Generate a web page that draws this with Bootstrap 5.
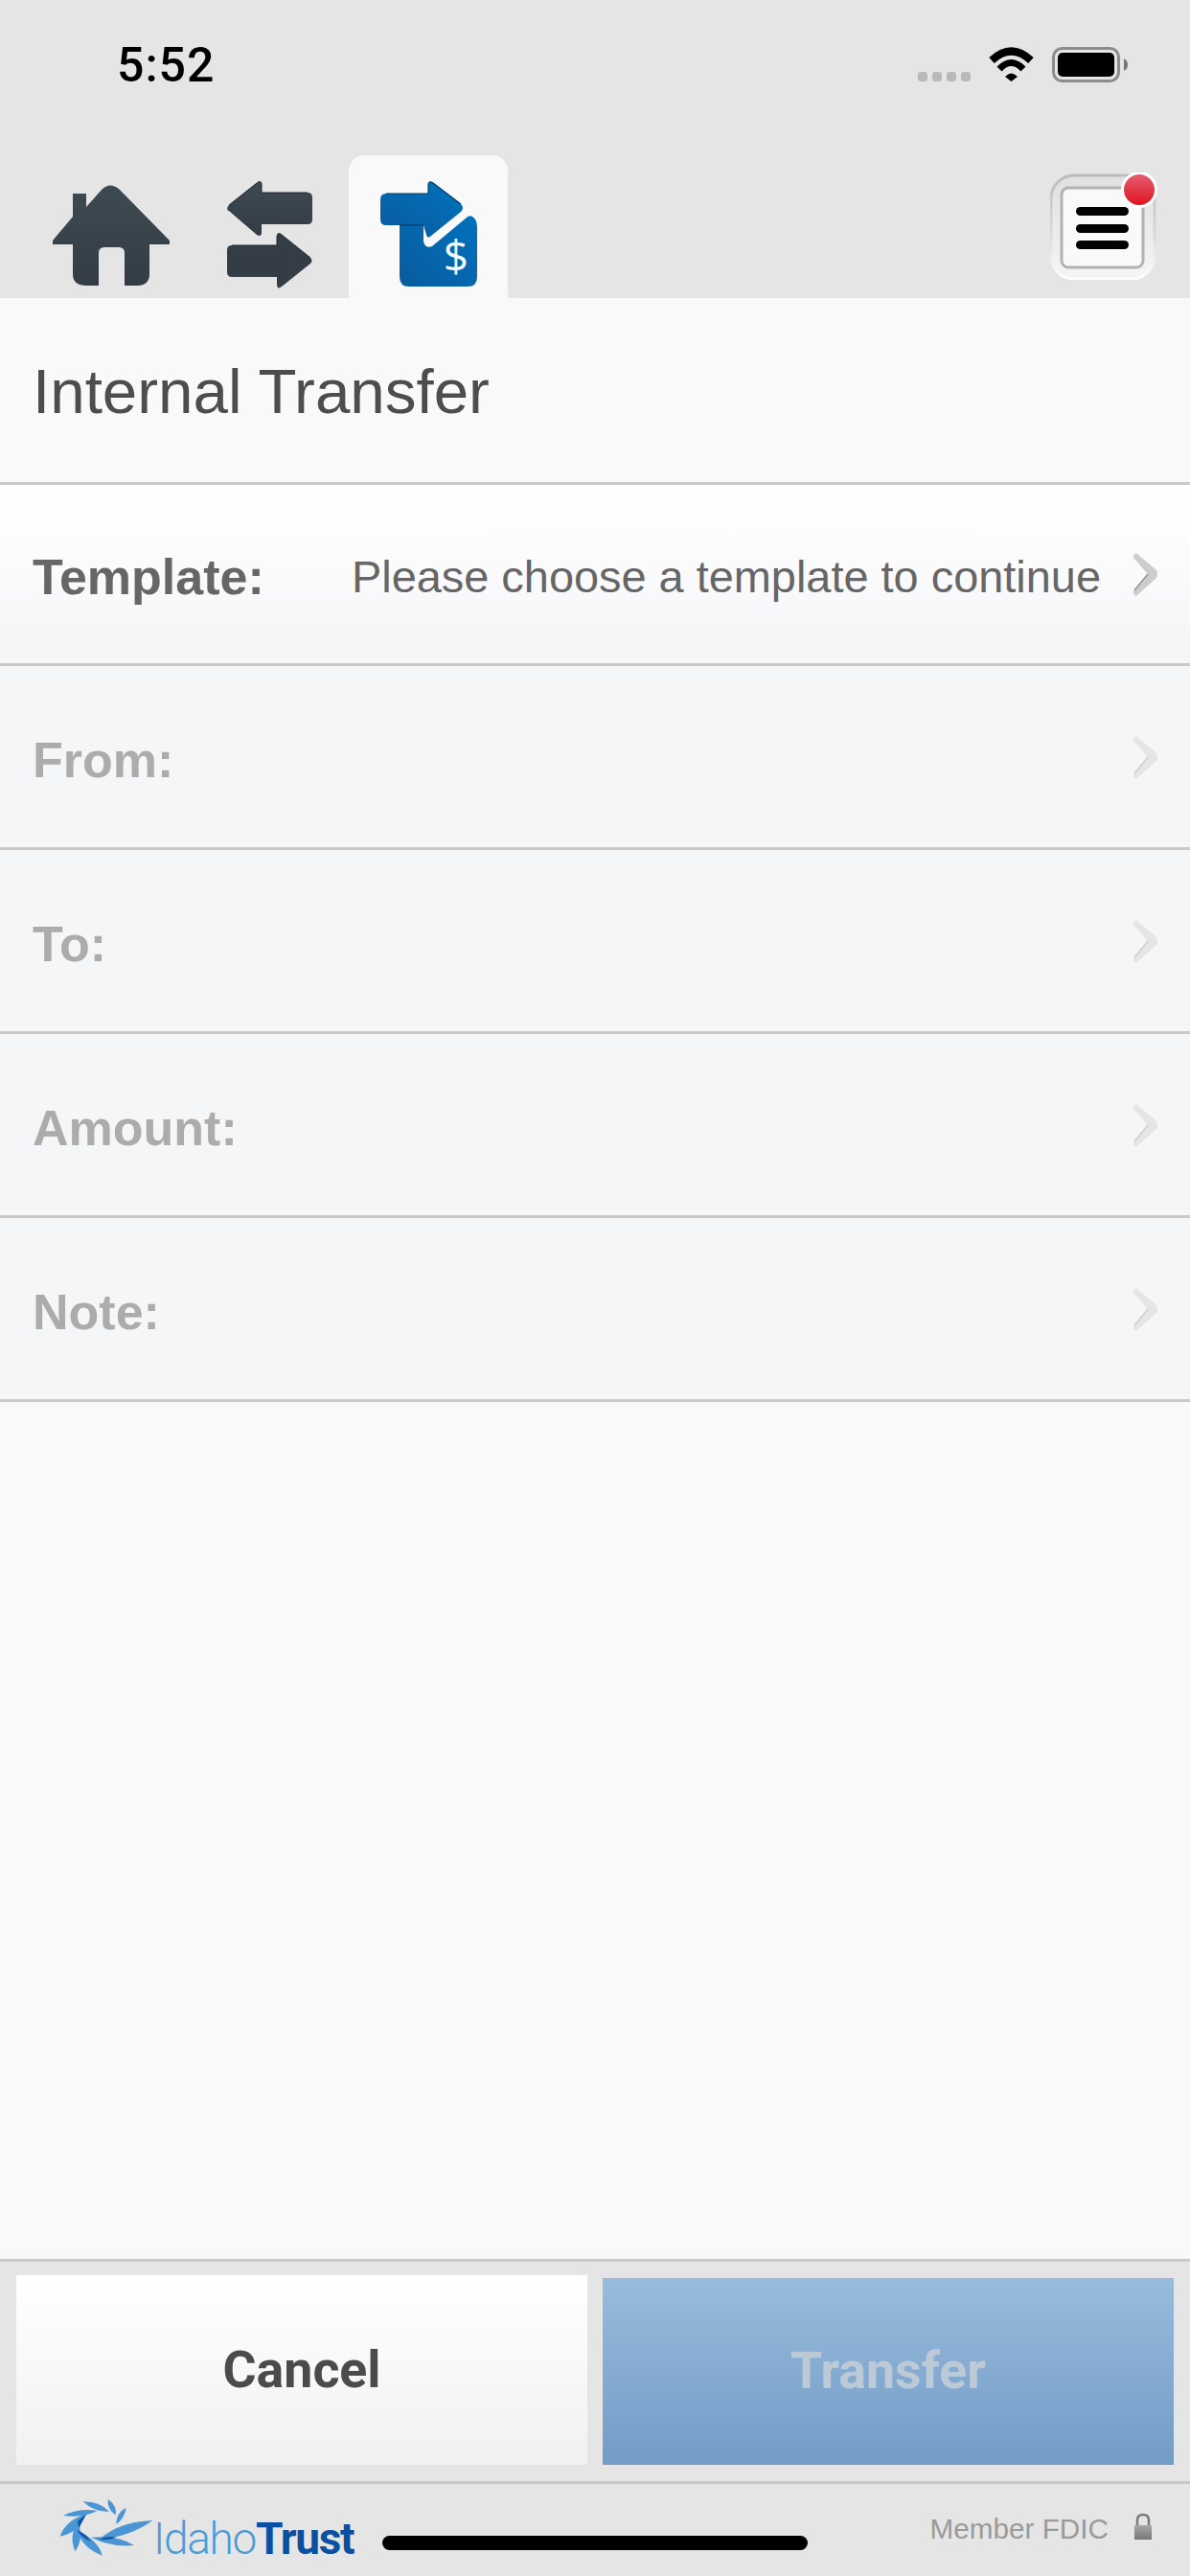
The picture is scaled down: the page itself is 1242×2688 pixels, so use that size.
<!DOCTYPE html>
<html>
<head>
    <title>Internal Transfer</title>
    <link href="https://cdn.jsdelivr.net/npm/bootstrap@5.3.0/dist/css/bootstrap.min.css" rel="stylesheet">
    <style>
        body { font-family: "Liberation Sans", Arial, sans-serif; background-color: #e5e5e5; }
        .screen { height: 2688px; overflow: hidden; }
        .status-row { height: 162px; padding: 40px 62px 0 122px; }
        .clock { font-family: Roboto, sans-serif; font-weight: 500; font-size: 50px; line-height: 50px; color: #000; letter-spacing: 1px; margin-top: 3px; }
        .tab-row { height: 149px; }
        .tab-slot { display: block; width: 182px; height: 149px; }
        .tab-current { display: block; width: 166px; height: 149px; background-color: #f9f9f9; border-radius: 16px 16px 0 0; }
        .menu-btn { display: block; width: 112px; height: 112px; margin: 18px 34px 0 0; }
        .main-pane { background-color: #f9f9f9; }
        .title-row { height: 195px; padding: 5px 0 0 34px; border-bottom: 3px solid #c9c9c9; }
        .title-row h1 { font-size: 65.500px; font-weight: 400; color: #4d4d4d; margin: 0; }
        .pick-list { border-radius: 0; }
        .pick-row { height: 192px; padding: 0 30px 0 34px; background-color: #f5f6f8; border: 0; border-bottom: 3px solid #c9c9c9; color: #acacac; font-size: 52px; }
        .pick-row.is-open { height: 189px; background-color: transparent; background-image: linear-gradient(#fff, #fbfbfc 45%, #f5f6f8 85%); color: #666; }
        .pick-label { font-weight: 700; padding-top: 7px; }
        .is-open .pick-label { padding-top: 6px; }
        .pick-value { font-size: 46.900px; padding-top: 6px; margin-left: auto; margin-right: 31px; }
        .pick-arrow { flex-shrink: 0; }
        .pick-label + .pick-arrow { margin-left: auto; }
        .pick-row.is-shut .pick-arrow { opacity: .4; }
        .action-bar { height: 232px; padding: 14px 17px 17px; gap: 16px; border-top: 3px solid #c9c9c9; }
        .act-btn { width: 596px; border: 0; border-radius: 0; font-family: Roboto, sans-serif; font-weight: 700; font-size: 53.700px; }
        .cancel-btn, .cancel-btn:hover { color: #4b4b4b; background-image: linear-gradient(#fff, #f1f1f1); }
        .go-btn:disabled { height: 195px; opacity: 1; color: #bcc9d6; background-image: linear-gradient(#99bcdd, #729bc6); }
        .foot-row { height: 99px; border-top: 3px solid #c9c9c9; padding: 0 39px 0 60px; position: relative; }
        .brand-swirl { margin-top: 13px; flex-shrink: 0; }
        .brand-text { font-size: 46px; letter-spacing: -1.300px; line-height: 1; margin: 34px 0 0 -2px; font-family: Roboto, sans-serif; font-weight: 300; color: #4f9bd5; }
        .brand-text b { font-weight: 700; color: #0a50a1; }
        .fdic { font-size: 29.700px; color: #9a9a9a; margin: 29px 0 0 auto; line-height: 36px; }
        .lock-ico { margin: 30px 0 0 26px; flex-shrink: 0; }
        .home-bar { position: absolute; left: 399px; top: 54px; width: 444px; height: 15px; border-radius: 8px; background-color: #000; }
    </style>
</head>
<body>
<svg width="0" height="0" class="position-absolute">
    <defs>
        <linearGradient id="slate" x1="0" y1="0" x2="0" y2="1"><stop offset="0" stop-color="#3e4a53"/><stop offset="1" stop-color="#333c44"/></linearGradient>
        <linearGradient id="blue" x1="0" y1="1" x2="1" y2="0"><stop offset="0" stop-color="#0a5b9e"/><stop offset="1" stop-color="#0072be"/></linearGradient>
        <linearGradient id="frame" x1="0" y1="0" x2="0" y2="1"><stop offset="0" stop-color="#bcbcbc"/><stop offset=".6" stop-color="#dcdcdc"/><stop offset="1" stop-color="#fff"/></linearGradient>
        <linearGradient id="frameFill" x1="0" y1="0" x2="0" y2="1"><stop offset="0" stop-color="#dfe0e0"/><stop offset="1" stop-color="#f5f5f5"/></linearGradient>
        <linearGradient id="dot" x1="0" y1="0" x2="0" y2="1"><stop offset="0" stop-color="#e66074"/><stop offset="1" stop-color="#e0101c"/></linearGradient>
        <linearGradient id="lockFill" x1="0" y1="0" x2="0" y2="1"><stop offset="0" stop-color="#a8a8a8"/><stop offset="1" stop-color="#777"/></linearGradient>
        <symbol id="chev" viewBox="1180 572 32 52">
            <path d="M1183 581Q1183 576 1187 577L1207 594Q1209 598 1207 602L1187 620Q1183 622 1183 616L1198 598Z" fill="#cdcdcd"/>
            <path d="M1184 615L1198 598" stroke="#8c8c8c" stroke-width="1.200" fill="none"/>
        </symbol>
    </defs>
</svg>

<div class="screen d-flex flex-column">
    <div class="status-row d-flex justify-content-between align-items-start">
        <span class="clock">5:52</span>
        <svg width="230" height="55" viewBox="950 40 230 55">
            <g fill="#b9b9b9">
                <rect x="958" y="75" width="10" height="10" rx="3"/>
                <rect x="973" y="75" width="10" height="10" rx="3"/>
                <rect x="988" y="75" width="10" height="10" rx="3"/>
                <rect x="1003" y="75" width="10" height="10" rx="3"/>
            </g>
            <path d="M1035 63Q1055.500 44 1076 63" fill="none" stroke="#000" stroke-width="8"/>
            <path d="M1043 72Q1055.500 59 1068 72" fill="none" stroke="#000" stroke-width="7"/>
            <path d="M1049 80Q1055.500 73 1062 80L1055.500 85Z" fill="#000"/>
            <rect x="1099.500" y="50.500" width="68" height="34" rx="9" fill="none" stroke="#8c8c8c" stroke-width="3"/>
            <rect x="1104" y="55" width="59" height="25" rx="5" fill="#000"/>
            <path d="M1173 61Q1177 63 1177 67.500Q1177 72 1173 74Z" fill="#777"/>
        </svg>
    </div>

    <div class="tab-row d-flex">
        <a class="tab-slot" href="#" aria-label="Home">
            <svg width="182" height="149" viewBox="0 162 182 149">
                <path d="M55 251L76 226V202H90V216L106 198Q115 189 125 198L177 251V255H156V286Q156 298 143 298H130V264Q130 258 124 258H109Q103 258 103 264V298H90Q76 298 76 286V255H55Z" fill="url(#slate)"/>
            </svg>
        </a>
        <a class="tab-slot" href="#" aria-label="Transfers">
            <svg width="182" height="149" viewBox="182 162 182 149">
                <path d="M238 220Q236 217 239 214L268 191Q273 187 273 193V201H321Q326 201 326 206V229Q326 234 321 234H273V242Q273 248 268 245L239 220Z" fill="url(#slate)"/>
                <path d="M237 261Q237 256 242 256H289V248Q289 241 294 245L324 269Q327 272 324 275L294 299Q289 303 289 296V289H242Q237 289 237 284Z" fill="#343d45"/>
                <path d="M239 214L268 191Q273 187 273 193V201H321M242 256H289V248Q289 241 294 245L324 269" fill="none" stroke="#1f262c" stroke-width="1"/>
            </svg>
        </a>
        <a class="tab-current" href="#" aria-label="Internal Transfer">
            <svg width="166" height="149" viewBox="364 162 166 149">
                <path d="M417 235H442V252Q444 260 451 257L487 227Q490 224 493 226Q498 229 498 237V289Q498 299 488 299H427Q417 299 417 289Z" fill="url(#blue)"/>
                <path d="M397 208Q397 202 403 202H447V193Q447 188 452 191L481 213Q485 217 481 221L450 246Q446 250 445 245L442 235H403Q397 235 397 229Z" fill="url(#blue)"/>
                <path d="M403 202H447V193Q447 188 452 191L481 213M417 235H442" fill="none" stroke="#06365f" stroke-width="1.200"/>
                <text x="476" y="284" text-anchor="middle" font-family="Open Sans, sans-serif" font-size="46" fill="#f4f8fb">$</text>
            </svg>
        </a>
        <a class="menu-btn ms-auto" href="#" aria-label="Menu">
            <svg width="112" height="112" viewBox="1096 180 112 112">
                <rect x="1097" y="183" width="108" height="108" rx="24" fill="url(#frameFill)" stroke="url(#frame)" stroke-width="3"/>
                <rect x="1108" y="196" width="85" height="83" rx="7" fill="#f9f9f9" stroke="#b2b2b2" stroke-width="3"/>
                <rect x="1123" y="216" width="55" height="9" rx="4.500" fill="#000"/>
                <rect x="1123" y="234" width="55" height="9" rx="4.500" fill="#000"/>
                <rect x="1123" y="251" width="55" height="9" rx="4.500" fill="#000"/>
                <circle cx="1189" cy="198" r="17.500" fill="url(#dot)" stroke="#fff" stroke-width="3"/>
            </svg>
        </a>
    </div>

    <div class="main-pane flex-grow-1 d-flex flex-column">
        <div class="title-row d-flex align-items-center">
            <h1>Internal Transfer</h1>
        </div>
        <div class="list-group pick-list">
            <a href="#" class="list-group-item pick-row is-open d-flex align-items-center">
                <span class="pick-label">Template:</span>
                <span class="pick-value">Please choose a template to continue</span>
                <svg class="pick-arrow" width="32" height="52"><use href="#chev"/></svg>
            </a>
            <a href="#" class="list-group-item pick-row is-shut d-flex align-items-center">
                <span class="pick-label">From:</span>
                <svg class="pick-arrow" width="32" height="52"><use href="#chev"/></svg>
            </a>
            <a href="#" class="list-group-item pick-row is-shut d-flex align-items-center">
                <span class="pick-label">To:</span>
                <svg class="pick-arrow" width="32" height="52"><use href="#chev"/></svg>
            </a>
            <a href="#" class="list-group-item pick-row is-shut d-flex align-items-center">
                <span class="pick-label">Amount:</span>
                <svg class="pick-arrow" width="32" height="52"><use href="#chev"/></svg>
            </a>
            <a href="#" class="list-group-item pick-row is-shut d-flex align-items-center">
                <span class="pick-label">Note:</span>
                <svg class="pick-arrow" width="32" height="52"><use href="#chev"/></svg>
            </a>
        </div>
    </div>

    <div class="action-bar d-flex align-items-end">
        <button type="button" class="btn act-btn cancel-btn h-100">Cancel</button>
        <button type="button" class="btn act-btn go-btn" disabled>Transfer</button>
    </div>

    <div class="foot-row d-flex align-items-start">
        <svg class="brand-swirl" width="102" height="64" viewBox="60 50 306 192">
            <g fill="#4a96d4">
                <path d="M358 125Q250 130 190 185Q290 175 358 125Z"/>
                <path d="M300 203Q250 170 165 178Q230 210 300 203Z"/>
                <path d="M200 235Q190 190 122 155Q135 210 200 235Z"/>
                <path d="M115 222Q145 180 123 128Q95 175 115 222Z"/>
                <path d="M68 175Q125 165 150 105Q85 125 68 175Z"/>
                <path d="M78 110Q140 118 185 95Q130 85 78 110Z"/>
                <path d="M140 66Q175 100 222 97Q190 65 140 66Z"/>
                <path d="M218 58Q215 90 242 108Q248 80 218 58Z"/>
                <path d="M275 85Q245 100 243 137Q270 120 275 85Z"/>
            </g>
            <g fill="#0b55a6">
                <path d="M190 185Q215 172 245 178Q215 188 190 185Z"/>
                <path d="M122 155Q145 165 165 190Q135 180 122 155Z"/>
                <path d="M123 128Q135 118 150 105Q140 125 127 150Z"/>
            </g>
        </svg>
        <span class="brand-text">Idaho<b>Trust</b></span>
        <span class="fdic">Member FDIC</span>
        <svg class="lock-ico" width="20" height="28" viewBox="0 0 20 28">
            <path d="M4 13V8Q4 2 10 2Q16 2 16 8V13" fill="none" stroke="#7c7c7c" stroke-width="2.500"/>
            <rect x="1" y="13" width="18" height="15" fill="url(#lockFill)"/>
        </svg>
        <div class="home-bar"></div>
    </div>
</div>
<script src="https://cdn.jsdelivr.net/npm/bootstrap@5.3.0/dist/js/bootstrap.bundle.min.js"></script>
</body>
</html>
